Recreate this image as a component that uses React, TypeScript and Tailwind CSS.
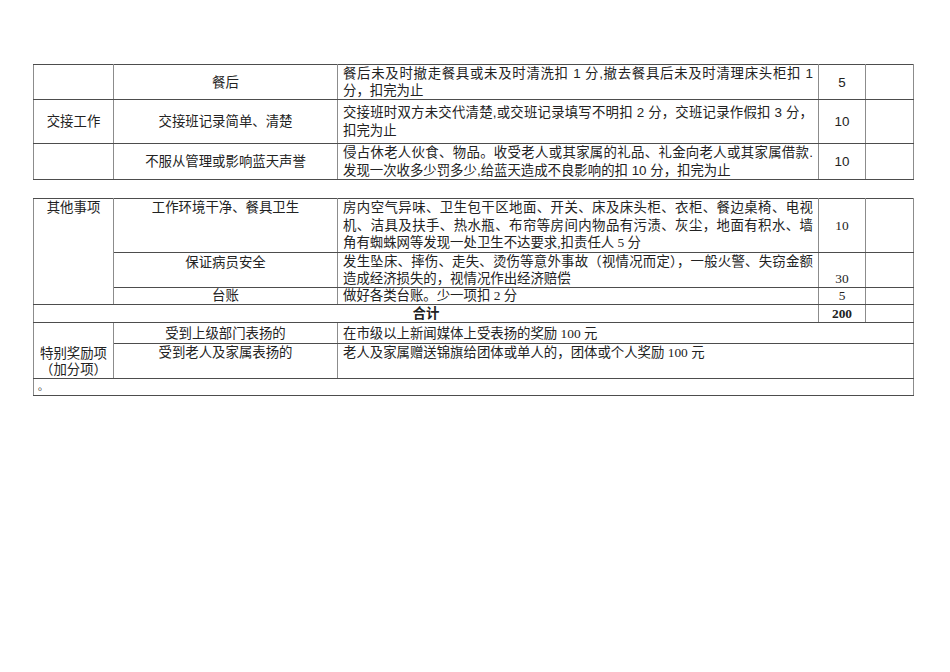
import React from "react";

const cell =
  "p-0 border-x border-x-[#8c8c8c] border-y border-y-[#4d4d4d] align-middle";

function Lines({ lines, lh }: { lines: string[]; lh: string }) {
  return (
    <div className="px-[5px]">
      {lines.map((t, i) => (
        <div
          key={i}
          className={`${lh} ${
            i < lines.length - 1 ? "text-justify [text-align-last:justify]" : ""
          }`}
        >
          {t}
        </div>
      ))}
    </div>
  );
}

export default function App() {
  return (
    <div className="w-[950px] h-[672px] bg-white text-[#222] text-[13.4px] leading-[17px] [font-family:'Liberation_Sans','Noto_Sans_CJK_SC',sans-serif]">
      <div className="pt-[64px] pl-[33px]">
        <table className="table-fixed border-collapse w-[880px]">
          <colgroup>
            <col className="w-[80px]" />
            <col className="w-[224px]" />
            <col className="w-[481px]" />
            <col className="w-[47px]" />
            <col className="w-[48px]" />
          </colgroup>
          <tbody>
            <tr className="h-[35px]">
              <td className={cell}></td>
              <td className={`${cell} text-center`}>
                <div className="h-[17px]">餐后</div>
              </td>
              <td className={cell}>
                <Lines
                  lh="h-[17px] leading-[17px]"
                  lines={[
                    "餐后未及时撤走餐具或未及时清洗扣 1 分,撤去餐具后未及时清理床头柜扣 1",
                    "分，扣完为止",
                  ]}
                />
              </td>
              <td className={`${cell} text-center`}>
                <div className="h-[17px]">5</div>
              </td>
              <td className={cell}></td>
            </tr>
            <tr className="h-[44px]">
              <td className={`${cell} text-center`}>
                <div className="h-[17px]">交接工作</div>
              </td>
              <td className={`${cell} text-center`}>
                <div className="h-[17px]">交接班记录简单、清楚</div>
              </td>
              <td className={cell}>
                <Lines
                  lh="h-[18px] leading-[18px]"
                  lines={[
                    "交接班时双方未交代清楚,或交班记录填写不明扣 2 分，交班记录作假扣 3 分，",
                    "扣完为止",
                  ]}
                />
              </td>
              <td className={`${cell} text-center`}>
                <div className="h-[17px]">10</div>
              </td>
              <td className={cell}></td>
            </tr>
            <tr className="h-[36px]">
              <td className={cell}></td>
              <td className={`${cell} text-center`}>
                <div className="h-[17px]">不服从管理或影响蓝天声誉</div>
              </td>
              <td className={cell}>
                <Lines
                  lh="h-[17.5px] leading-[17.5px]"
                  lines={[
                    "侵占休老人伙食、物品。收受老人或其家属的礼品、礼金向老人或其家属借款.",
                    "发现一次收多少罚多少,给蓝天造成不良影响的扣 10 分，扣完为止",
                  ]}
                />
              </td>
              <td className={`${cell} text-center`}>
                <div className="h-[17px]">10</div>
              </td>
              <td className={cell}></td>
            </tr>
          </tbody>
        </table>

        <table className="table-fixed border-collapse w-[880px] mt-[18px] [font-family:'Liberation_Serif','Noto_Sans_CJK_SC',serif]">
          <colgroup>
            <col className="w-[80px]" />
            <col className="w-[224px]" />
            <col className="w-[481px]" />
            <col className="w-[47px]" />
            <col className="w-[48px]" />
          </colgroup>
          <tbody>
            <tr className="h-[54px]">
              <td rowSpan={3} className={`${cell} !align-top text-center`}>
                <div className="h-[17.6px] leading-[17.6px]">其他事项</div>
              </td>
              <td className={`${cell} !align-top text-center`}>
                <div className="h-[17.6px] leading-[17.6px]">工作环境干净、餐具卫生</div>
              </td>
              <td className={`${cell} !align-top`}>
                <Lines
                  lh="h-[17.6px] leading-[17.6px]"
                  lines={[
                    "房内空气异味、卫生包干区地面、开关、床及床头柜、衣柜、餐边桌椅、电视",
                    "机、洁具及扶手、热水瓶、布帘等房间内物品有污渍、灰尘，地面有积水、墙",
                    "角有蜘蛛网等发现一处卫生不达要求,扣责任人 5 分",
                  ]}
                />
              </td>
              <td className={`${cell} text-center`}>
                <div className="h-[17px]">10</div>
              </td>
              <td className={cell}></td>
            </tr>
            <tr className="h-[35px]">
              <td className={`${cell} !align-top text-center`}>
                <div className="h-[17px] pt-[1px]">保证病员安全</div>
              </td>
              <td className={`${cell} !align-top`}>
                <Lines
                  lh="h-[17px] leading-[17px]"
                  lines={[
                    "发生坠床、摔伤、走失、烫伤等意外事故（视情况而定），一般火警、失窃金额",
                    "造成经济损失的，视情况作出经济赔偿",
                  ]}
                />
              </td>
              <td className={`${cell} !align-bottom text-center`}>
                <div className="h-[17px]">30</div>
              </td>
              <td className={cell}></td>
            </tr>
            <tr className="h-[17px]">
              <td className={`${cell} text-center`}>
                <div className="h-[16px] leading-[16px]">台账</div>
              </td>
              <td className={cell}>
                <Lines lh="h-[16px] leading-[16px]" lines={["做好各类台账。少一项扣 2 分"]} />
              </td>
              <td className={`${cell} text-center`}>
                <div className="h-[16px] leading-[16px]">5</div>
              </td>
              <td className={cell}></td>
            </tr>
            <tr className="h-[18px] font-bold">
              <td
                colSpan={3}
                className={`${cell} text-center [font-family:'Liberation_Sans','Noto_Sans_CJK_SC',sans-serif]`}
              >
                <div className="h-[16px] leading-[16px]">合计</div>
              </td>
              <td className={`${cell} text-center`}>
                <div className="h-[16px] leading-[16px]">200</div>
              </td>
              <td className={cell}></td>
            </tr>
            <tr className="h-[21px]">
              <td rowSpan={2} className={`${cell} !align-bottom text-center`}>
                <div className="h-[16px] leading-[16px]">特别奖励项</div>
                <div className="h-[16px] leading-[16px]">（加分项）</div>
              </td>
              <td className={`${cell} text-center`}>
                <div className="h-[17px] leading-[17px]">受到上级部门表扬的</div>
              </td>
              <td colSpan={3} className={cell}>
                <Lines
                  lh="h-[17px] leading-[17px]"
                  lines={["在市级以上新闻媒体上受表扬的奖励 100 元"]}
                />
              </td>
            </tr>
            <tr className="h-[35px]">
              <td className={`${cell} !align-top text-center`}>
                <div className="h-[18px] leading-[18px]">受到老人及家属表扬的</div>
              </td>
              <td colSpan={3} className={`${cell} !align-top`}>
                <Lines
                  lh="h-[18px] leading-[18px]"
                  lines={["老人及家属赠送锦旗给团体或单人的，团体或个人奖励 100 元"]}
                />
              </td>
            </tr>
            <tr className="h-[17px]">
              <td colSpan={5} className={`${cell} px-[4px] text-[10px]`}>
                <div className="h-[16px] leading-[16px]">。</div>
              </td>
            </tr>
          </tbody>
        </table>
      </div>
    </div>
  );
}
